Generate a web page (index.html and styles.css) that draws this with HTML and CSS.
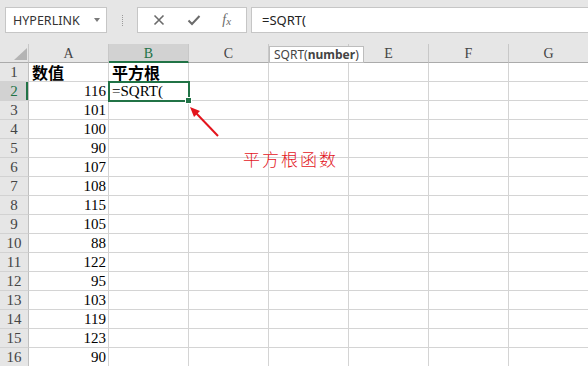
FILE: index.html
```html
<!DOCTYPE html>
<html lang="zh-CN">
<head>
    <meta charset="UTF-8">
    <title>SQRT</title>
    <link rel="stylesheet" href="styles.css">
</head>
<body>
    <div class="app">
        <div class="toolbar">
            <div class="namebox"><span>HYPERLINK</span><span class="caret"></span></div>
            <div class="grip"><span></span></div>
            <div class="fx-buttons">
                <svg width="12" height="12" viewBox="0 0 12 12"><path d="M1.5 1.5 L10.5 10.5 M10.5 1.5 L1.5 10.5" stroke="#6b6b6b" stroke-width="1.6" fill="none"/></svg>
                <svg width="14" height="12" viewBox="0 0 14 12"><path d="M1.5 6.5 L5 10 L12.5 2" stroke="#6b6b6b" stroke-width="2" fill="none"/></svg>
                <span class="fx">f<span>x</span></span>
            </div>
            <div class="formula">=SQRT(</div>
        </div>

        <div class="sheet">
            <div class="row head">
                <div class="corner"><span></span></div>
                <!-- D label sits under the function hint -->
                <div class="ch">A</div><div class="ch sel">B</div><div class="ch">C</div><div class="ch"></div><div class="ch">E</div><div class="ch">F</div><div class="ch">G</div>
            </div>
            <div class="row"><div class="rh">1</div><div class="c bold">数值</div><div class="c bold">平方根</div><div class="c"></div><div class="c"></div><div class="c"></div><div class="c"></div><div class="c"></div></div>
            <div class="row"><div class="rh sel">2</div><div class="c num">116</div><div class="c active">=SQRT(</div><div class="c"></div><div class="c"></div><div class="c"></div><div class="c"></div><div class="c"></div></div>
            <div class="row"><div class="rh">3</div><div class="c num">101</div><div class="c"></div><div class="c"></div><div class="c"></div><div class="c"></div><div class="c"></div><div class="c"></div></div>
            <div class="row"><div class="rh">4</div><div class="c num">100</div><div class="c"></div><div class="c"></div><div class="c"></div><div class="c"></div><div class="c"></div><div class="c"></div></div>
            <div class="row"><div class="rh">5</div><div class="c num">90</div><div class="c"></div><div class="c"></div><div class="c"></div><div class="c"></div><div class="c"></div><div class="c"></div></div>
            <div class="row"><div class="rh">6</div><div class="c num">107</div><div class="c"></div><div class="c"></div><div class="c"></div><div class="c"></div><div class="c"></div><div class="c"></div></div>
            <div class="row"><div class="rh">7</div><div class="c num">108</div><div class="c"></div><div class="c"></div><div class="c"></div><div class="c"></div><div class="c"></div><div class="c"></div></div>
            <div class="row"><div class="rh">8</div><div class="c num">115</div><div class="c"></div><div class="c"></div><div class="c"></div><div class="c"></div><div class="c"></div><div class="c"></div></div>
            <div class="row"><div class="rh">9</div><div class="c num">105</div><div class="c"></div><div class="c"></div><div class="c"></div><div class="c"></div><div class="c"></div><div class="c"></div></div>
            <div class="row"><div class="rh">10</div><div class="c num">88</div><div class="c"></div><div class="c"></div><div class="c"></div><div class="c"></div><div class="c"></div><div class="c"></div></div>
            <div class="row"><div class="rh">11</div><div class="c num">122</div><div class="c"></div><div class="c"></div><div class="c"></div><div class="c"></div><div class="c"></div><div class="c"></div></div>
            <div class="row"><div class="rh">12</div><div class="c num">95</div><div class="c"></div><div class="c"></div><div class="c"></div><div class="c"></div><div class="c"></div><div class="c"></div></div>
            <div class="row"><div class="rh">13</div><div class="c num">103</div><div class="c"></div><div class="c"></div><div class="c"></div><div class="c"></div><div class="c"></div><div class="c"></div></div>
            <div class="row"><div class="rh">14</div><div class="c num">119</div><div class="c"></div><div class="c"></div><div class="c"></div><div class="c"></div><div class="c"></div><div class="c"></div></div>
            <div class="row"><div class="rh">15</div><div class="c num">123</div><div class="c"></div><div class="c"></div><div class="c"></div><div class="c"></div><div class="c"></div><div class="c"></div></div>
            <div class="row"><div class="rh">16</div><div class="c num">90</div><div class="c"></div><div class="c"></div><div class="c"></div><div class="c"></div><div class="c"></div><div class="c"></div></div>
        </div>

        <!-- function hint and annotation drawn over the grid -->
        <div class="hint">SQRT(<b>number</b>)</div>
        <svg class="arrow" width="40" height="40" viewBox="0 0 40 40">
            <path d="M30 31 L8 8" stroke="#e3151d" stroke-width="2" fill="none"/>
            <path d="M2 2 L12 6 L6 12 Z" fill="#e3151d"/>
        </svg>
        <div class="note">平方根函数</div>
    </div>
</body>
</html>
```

FILE: styles.css
```css
body {
    margin: 0;
    background: #fff;
    font-family: "Liberation Serif", "Noto Sans CJK SC", serif;
}
.app {
    position: relative;
    width: 588px;
    height: 366px;
    overflow: hidden;
}

/* formula bar */
.toolbar {
    height: 44px;
    box-sizing: border-box;
    padding: 7px 0 0 5px;
    background: #e6e6e6;
    display: flex;
    align-items: flex-start;
}
.namebox {
    width: 102px;
    height: 26px;
    box-sizing: border-box;
    border: 1px solid #c6c6c6;
    background: #fff;
    display: flex;
    align-items: center;
    justify-content: space-between;
    padding: 0 6px 0 7px;
    font: 12.5px "Noto Sans", sans-serif;
    color: #333;
}
.caret {
    width: 0;
    height: 0;
    border-left: 3.5px solid transparent;
    border-right: 3.5px solid transparent;
    border-top: 4px solid #7a7a7a;
}
.grip {
    width: 30px;
    height: 26px;
    display: flex;
    align-items: center;
    justify-content: center;
}
.grip span {
    height: 11px;
    border-left: 1px dotted #9a9a9a;
}
.fx-buttons {
    width: 110px;
    height: 26px;
    box-sizing: border-box;
    border: 1px solid #c6c6c6;
    background: #fff;
    display: flex;
    align-items: center;
    justify-content: space-around;
    padding: 0 4px;
}
.fx {
    font: italic 14px "Liberation Serif", serif;
    color: #6b6b6b;
}
.fx span {
    font-size: 11px;
    position: relative;
    top: 1px;
}
.formula {
    flex: 1;
    height: 26px;
    margin-left: 4px;
    box-sizing: border-box;
    border: 1px solid #c6c6c6;
    border-right: none;
    background: #fff;
    padding-left: 10px;
    font: 13px/24px "Noto Sans", sans-serif;
    color: #222;
}

/* grid */
.row {
    display: flex;
    height: 19px;
}
.row > div {
    flex: none;
    box-sizing: border-box;
    height: 19px;
    white-space: nowrap;
}
.corner {
    width: 29px;
    background: #e6e6e6;
    border-right: 1px solid #c8c8c8;
    border-bottom: 1px solid #ababab;
    display: flex;
    align-items: flex-end;
    justify-content: flex-end;
    padding: 0 1px 2px 0;
}
.corner span {
    width: 13px;
    height: 12px;
    background: #b4b4b4;
    clip-path: polygon(100% 0, 100% 100%, 0 100%);
}
.ch {
    width: 80px;
    background: #e6e6e6;
    border-right: 1px solid #c8c8c8;
    border-bottom: 1px solid #ababab;
    text-align: center;
    font-size: 14px;
    line-height: 19px;
    color: #444;
}
.ch.sel {
    background: #d2d2d2;
    color: #217346;
    border-bottom: 2px solid #217346;
}
.rh {
    width: 29px;
    background: #e6e6e6;
    border-right: 1px solid #c0c0c0;
    border-bottom: 1px solid #d2d2d2;
    text-align: center;
    font-size: 15px;
    line-height: 19px;
    color: #444;
}
.rh.sel {
    background: #d2d2d2;
    color: #217346;
    box-shadow: inset -2px 0 0 #217346;
}
.c {
    width: 80px;
    border-right: 1px solid #d4d4d4;
    border-bottom: 1px solid #d4d4d4;
    padding: 0 2px 0 3px;
    font-size: 15px;
    line-height: 18px;
    color: #000;
}
.c.num {
    text-align: right;
}
.c.bold {
    font-family: "Noto Sans CJK SC", sans-serif;
    font-weight: bold;
    font-size: 16px;
}
.c.active {
    position: relative;
    outline: 2px solid #217346;
    outline-offset: -1px;
}
.c.active::after {
    content: "";
    position: absolute;
    right: -4px;
    bottom: -4px;
    width: 5px;
    height: 5px;
    background: #217346;
    border: 1px solid #fff;
}

/* overlays */
.hint {
    position: absolute;
    left: 269px;
    top: 46px;
    height: 17px;
    box-sizing: border-box;
    padding: 0 4px;
    border: 1px solid #bdbdbd;
    background: #fff;
    font: 12px/15px "Noto Sans", sans-serif;
    color: #444;
}
.arrow {
    position: absolute;
    left: 188px;
    top: 105px;
}
.note {
    position: absolute;
    left: 243px;
    top: 146px;
    font: 300 17px "Noto Sans CJK SC", sans-serif;
    letter-spacing: 2px;
    color: #e3151d;
}
```
